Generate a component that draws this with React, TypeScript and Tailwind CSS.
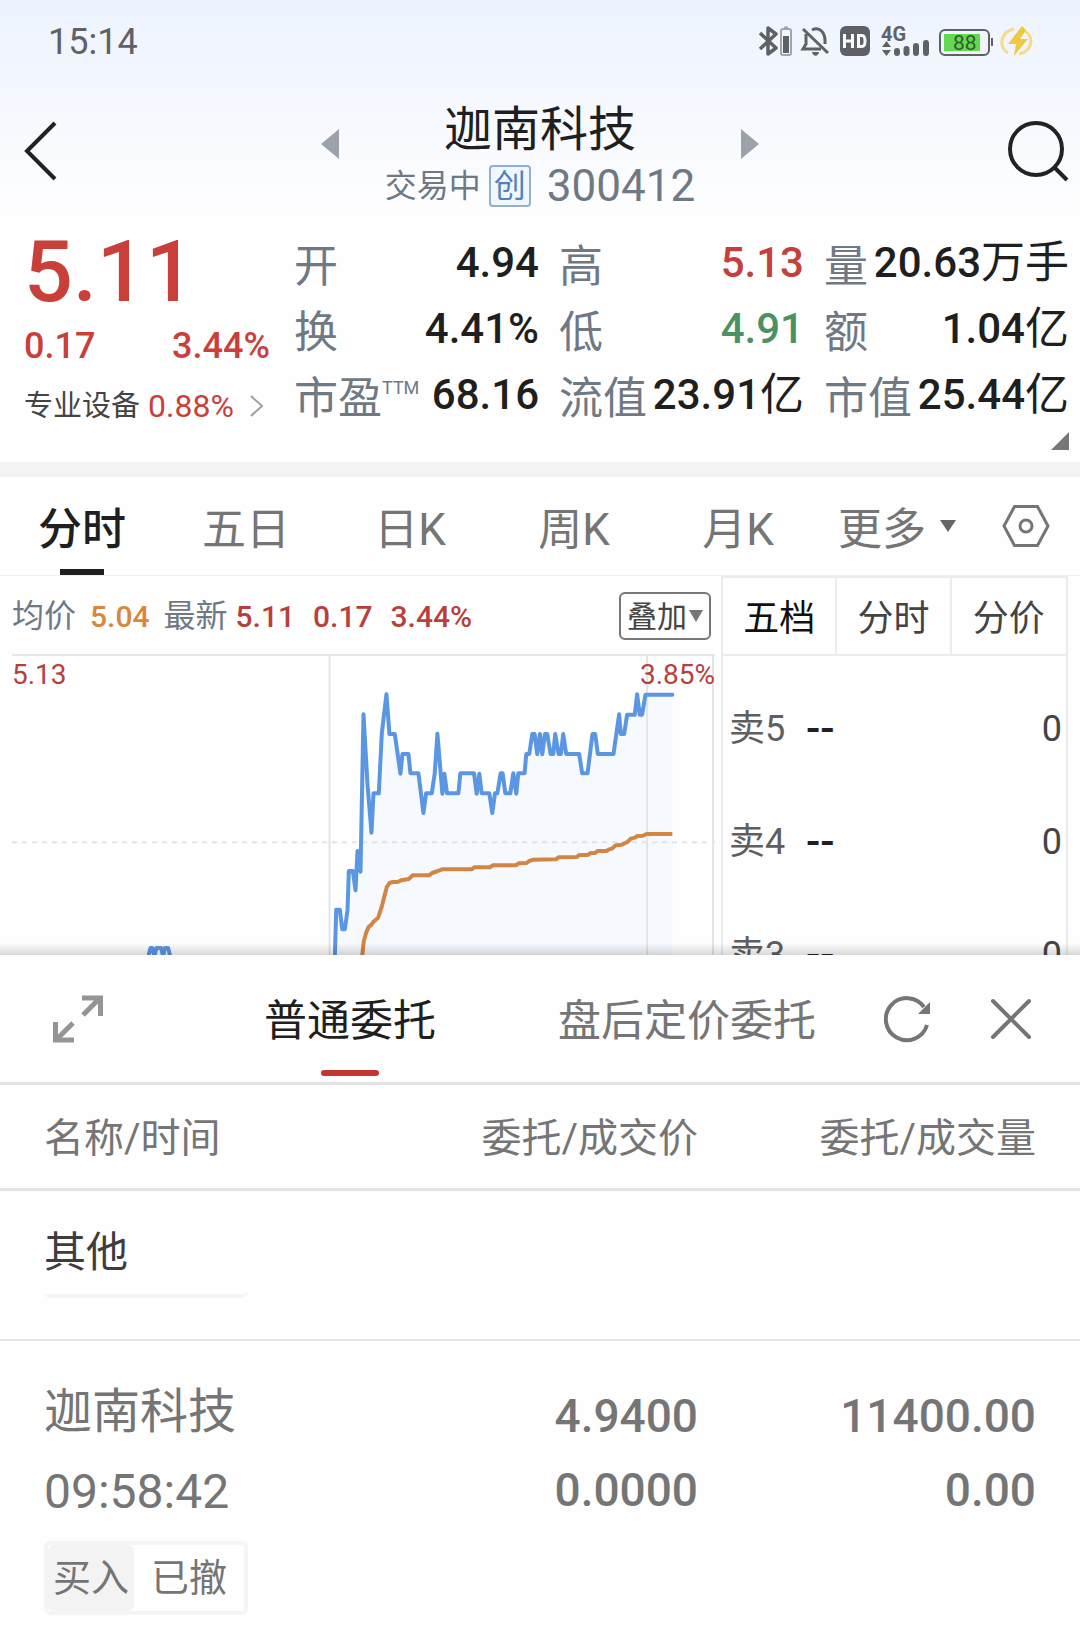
import { useState } from "react";

const quotes = [
  { label: "开", value: "4.94" },
  { label: "高", value: "5.13", color: "text-[#c4403c]" },
  { label: "量", value: "20.63", unit: "万手" },
  { label: "换", value: "4.41%" },
  { label: "低", value: "4.91", color: "text-[#4a9163]" },
  { label: "额", value: "1.04", unit: "亿" },
  { label: "市盈", sup: "TTM", value: "68.16" },
  { label: "流值", value: "23.91", unit: "亿" },
  { label: "市值", value: "25.44", unit: "亿" },
];

const periods = ["分时", "五日", "日K", "周K", "月K"];
const depthTabs = ["五档", "分时", "分价"];
const asks = ["卖5", "卖4", "卖3"];

const pricePoints =
  "76,915 80,776 91,776 98,835 106,835 114,776 118,660 130,660 138,718 144,600 153,662 162,190 174,400 186,545 192,427 208,427 217,247 231,130 240,249 256,249 273,368 279,309 297,309 303,367 327,367 342,486 350,427 367,427 376,367 384,248 399,428 405,368 413,427 447,427 453,367 494,367 502,428 510,368 517,427 540,427 549,486 557,427 564,427 574,367 580,367 588,427 603,427 612,367 621,428 627,367 646,367 651,309 660,309 669,249 676,249 684,310 692,249 699,310 707,249 714,249 724,309 732,309 738,249 748,309 755,309 762,249 771,309 810,309 819,367 835,367 850,249 858,249 866,309 913,309 930,190 935,249 945,249 954,191 977,191 984,130 992,191 999,191 1009,131 1090,131";

const averagePoints =
  "158,915 163,870 170,845 178,827 185,822 192,812 206,800 216,770 225,735 232,708 240,696 250,693 264,693 275,688 298,684 310,673 360,673 368,666 385,660 398,655 488,655 495,649 542,649 550,643 620,643 628,637 652,636 660,630 672,626 740,625 748,619 803,618 810,612 835,612 845,606 858,606 865,600 892,600 900,595 908,593 920,583 938,581 955,573 965,563 978,560 985,555 1002,554 1012,549 1090,549";

const StatusBar = () => (
  <div className="flex h-[84px] items-center justify-between pl-12 pr-[47px] text-[#606164]">
    <span className="text-[36px] leading-none">15:14</span>
    <svg className="h-11 w-[276px]" viewBox="757 20 276 44" fill="none" stroke="currentColor">
      {/* bluetooth */}
      <path d="M760 33l16 15-8 6V28l8 6-16 15" strokeWidth="3.500" strokeLinejoin="round" />
      <rect x="781" y="29" width="10" height="26" rx="2" stroke="#a3a4a8" strokeWidth="2" />
      <path d="M784 27.500h4" stroke="#a3a4a8" strokeWidth="2" />
      <path d="M783 36h6v17h-6z" fill="currentColor" stroke="none" />
      {/* muted bell */}
      <path d="M806 34v10l-3 5h18M812 30c8-4 13 3 13 11v3M803 29l25 24" strokeWidth="3" />
      <path d="M812 52h7c-1 5-6 5-7 0z" fill="currentColor" stroke="none" />
      {/* HD */}
      <rect x="840" y="26" width="30" height="30" rx="6" fill="currentColor" stroke="none" />
      <path d="M844.500 34v14M852.500 34v14M844.500 41h8M858.500 35.500v11h3.500c4 0 4-11 0-11z" stroke="#f6f9ff" strokeWidth="3" />
      {/* signal */}
      <text x="881" y="41" fill="currentColor" stroke="none" className="font-[Roboto] text-[20px] font-bold">
        4G
      </text>
      <path d="M882 47l4.500-6 4.500 6zM882 50l4.500 6 4.500-6z" fill="currentColor" stroke="none" />
      <path d="M897 51v2M906.500 49v4M916 46v7M926 43v10" strokeWidth="6" strokeLinecap="round" />
      {/* battery */}
      <rect x="940" y="30" width="49" height="25" rx="5" strokeWidth="2" />
      <path d="M944 34h36v17h-36z" fill="#62d950" stroke="none" />
      <path d="M992 38v8" strokeWidth="2" />
      <text x="953" y="50" fill="#2f5e2b" stroke="none" className="font-[Roboto] text-[21px]">
        88
      </text>
      {/* charging */}
      <path d="M1014 29c-15 3-15 20-6 24M1025 31c9 6 8 20-6 23" stroke="#f3dc8a" strokeWidth="3" />
      <path d="M1022 26l-14 18h8l-2 12 14-17h-8l6-9z" fill="#f0c93f" stroke="none" />
    </svg>
  </div>
);

const Header = () => (
  <header className="grid h-[134px] grid-cols-[1fr_438px_1fr] items-center px-[11px]">
    <button aria-label="返回" className="ml-3 justify-self-start">
      <svg className="h-[60px] w-9" viewBox="0 0 36 60" fill="none" stroke="#222" strokeWidth="4">
        <path d="M32 2L4 30l28 28" />
      </svg>
    </button>
    <div className="flex items-center justify-between self-start pt-[18px]">
      <button aria-label="上一只" className="mb-7">
        <svg className="h-[30px] w-[18px]" viewBox="0 0 18 30" fill="#9ca2ab">
          <path d="M18 0v30L0 15z" />
        </svg>
      </button>
      <div className="flex flex-col items-center">
        <h1 className="text-[48px] leading-[56px] text-[#1f1f1f]">迦南科技</h1>
        <div className="flex h-14 items-center text-[#6f7984]">
          <span className="text-[32px] leading-none">交易中</span>
          <span className="ml-2 flex size-[42px] items-center justify-center rounded border-2 border-[#8fb0cf] bg-[#f1f7fd] text-[32px] leading-none text-[#4f83bd]">
            创
          </span>
          <span className="ml-4 text-[44px] leading-none">300412</span>
        </div>
      </div>
      <button aria-label="下一只" className="mb-7">
        <svg className="h-[30px] w-[18px]" viewBox="0 0 18 30" fill="#9ca2ab">
          <path d="M0 0v30l18-15z" />
        </svg>
      </button>
    </div>
    <button aria-label="搜索" className="justify-self-end">
      <svg className="size-[62px]" viewBox="0 0 62 62" fill="none" stroke="#222" strokeWidth="4">
        <circle cx="29" cy="29" r="26" />
        <path d="M47 47l13 13" />
      </svg>
    </button>
  </header>
);

const Quote = () => (
  <section className="flex pl-6 pr-[11px] pt-2 text-[#c9403b]">
    <div className="w-[246px] shrink-0">
      <div className="text-[86px] font-medium leading-[92px]">5.11</div>
      <div className="flex justify-between text-[36px] font-medium leading-[56px]">
        <span>0.17</span>
        <span>3.44%</span>
      </div>
      <a href="#sector" className="flex items-center text-[32px] leading-[64px]">
        <span className="mr-2 text-[29px] text-[#444]">专业设备</span>
        0.88%
        <svg className="ml-4 h-[22px] w-3.5" viewBox="0 0 14 22" fill="none" stroke="#9aa0a6" strokeWidth="2">
          <path d="M1 1l11 10L1 21" />
        </svg>
      </a>
    </div>
    <div className="ml-6 flex-1 pt-2">
      <dl className="grid grid-cols-3 gap-x-5">
        {quotes.map((item) => (
          <div key={item.label} className="flex h-[66px] items-center justify-between whitespace-nowrap">
            <dt className="flex text-[44px] leading-[66px] text-[#6f7984]">
              {item.label}
              {item.sup && <sup className="top-0 text-[18px] leading-[44px]">{item.sup}</sup>}
            </dt>
            <dd className={`flex items-center pb-2 text-[42px] font-medium leading-[58px] ${item.color ?? "text-[#1f1f1f]"}`}>
              {item.value}
              {item.unit && <span className="text-[44px] font-normal">{item.unit}</span>}
            </dd>
          </div>
        ))}
      </dl>
      <svg className="mb-3 ml-auto size-[18px]" viewBox="0 0 18 18" fill="#777">
        <path d="M18 0v18H0z" />
      </svg>
    </div>
  </section>
);

const Chart = () => (
  <div className="relative h-[300px] border-t-2 border-[#e6e6e6]">
    <svg className="h-[300px] w-full" viewBox="-894 15 2112 900" preserveAspectRatio="none" fill="none">
      <polygon points={`${pricePoints} 1090,915`} fill="#f6f9fe" />
      <g stroke="#e2e4e6" strokeWidth="2">
        <path d="M60 15v900M1014 15v900M1212 15v900" vectorEffect="non-scaling-stroke" />
        <path d="M-894 574H1218" strokeDasharray="5 5" vectorEffect="non-scaling-stroke" />
      </g>
      <g stroke="#5b96e3" strokeWidth="4" strokeLinejoin="round" strokeLinecap="round">
        <polyline points={pricePoints} vectorEffect="non-scaling-stroke" />
        <path d="M-484 915l6-24h6l6 24 6-24h14l6 24 5-24h10l6 24" vectorEffect="non-scaling-stroke" />
      </g>
      <polyline points={averagePoints} stroke="#d28644" strokeWidth="4" strokeLinejoin="round" vectorEffect="non-scaling-stroke" />
    </svg>
    <span className="absolute left-0 top-0 text-[28px] leading-[38px] text-[#b8403c]">5.13</span>
    <span className="absolute right-0 top-0 text-[28px] leading-[38px] text-[#b8403c]">3.85%</span>
  </div>
);

const MarketView = () => {
  const [period, setPeriod] = useState("分时");
  const [depth, setDepth] = useState("五档");

  return (
    <section className="border-t-[15px] border-[#f3f3f3]">
      <nav className="flex h-[99px] items-center border-b border-[#f0f0f0] text-[44px] text-[#757575]">
        {periods.map((name) => (
          <button
            key={name}
            onClick={() => setPeriod(name)}
            className={`relative h-full flex-1 pt-2 ${period === name ? "font-medium text-[#1f1f1f]" : ""}`}
          >
            {name}
            {period === name && <span className="absolute inset-x-0 bottom-0 mx-auto h-1.5 w-11 bg-[#1f1f1f]" />}
          </button>
        ))}
        <button className="ml-[18px] flex items-center gap-3.5">
          <span className="pt-2">更多</span>
          <svg className="h-3 w-4" viewBox="0 0 16 12" fill="#666">
            <path d="M0 0h16L8 12z" />
          </svg>
        </button>
        <button aria-label="设置" className="ml-[46px] mr-[30px]">
          <svg className="h-[42px] w-12" viewBox="0 0 48 42" fill="none" stroke="#757575" strokeWidth="3">
            <path d="M12.500 1.500h23L46 21 35.500 40.500h-23L2 21z" />
            <circle cx="24" cy="21" r="6" />
          </svg>
        </button>
      </nav>

      <div className="relative flex h-[379px] overflow-hidden pl-3 pr-3">
        <div className="min-w-0 flex-1">
          <div className="flex h-[78px] items-center justify-between pt-0.5">
            <div className="flex items-center whitespace-nowrap text-[32px] text-[#6f7984]">
              均价
              <span className="ml-3.5 mr-3.5 text-[30px] font-medium text-[#d9873f]">5.04</span>
              最新
              <span className="ml-2 flex gap-[18px] text-[30px] font-medium text-[#b8403c]">
                <span>5.11</span>
                <span>0.17</span>
                <span>3.44%</span>
              </span>
            </div>
            <button className="mr-1 flex h-12 items-center gap-0.5 rounded-md border-2 border-[#777] px-1.5 text-[30px] text-[#444]">
              叠加
              <svg className="h-3 w-3.5" viewBox="0 0 14 12" fill="#777">
                <path d="M0 0h14L7 12z" />
              </svg>
            </button>
          </div>
          <Chart />
        </div>

        <div className="ml-1.5 h-[400px] w-[347px] shrink-0 border-2 border-[#ececec] text-[36px] text-[#444]">
          <div className="grid h-[78px] grid-cols-3 divide-x-2 divide-[#ececec] border-b-2 border-[#ececec]">
            {depthTabs.map((name) => (
              <button key={name} onClick={() => setDepth(name)} className={`pt-1.5 ${depth === name ? "text-[#111]" : ""}`}>
                {name}
              </button>
            ))}
          </div>
          <div className="pt-4">
            {asks.map((name) => (
              <div key={name} className="flex h-[113px] items-center pl-1.5 pr-1">
                <span className="w-[77px] text-[#5f5f5f]">{name}</span>
                <span className="text-[42px] font-medium text-[#1f1f1f]">--</span>
                <span className="ml-auto">0</span>
              </div>
            ))}
          </div>
        </div>
        <div className="pointer-events-none absolute inset-x-0 bottom-0 h-3 bg-linear-to-t from-black/15 to-transparent" />
      </div>
    </section>
  );
};

const Orders = () => (
  <section className="bg-[#fefefe] text-[#757575]">
    <div className="flex h-[130px] items-center border-b-[3px] border-[#e3e3e3] pl-[52px] pr-12 text-[43px]">
      <button aria-label="展开">
        <svg className="size-[52px]" viewBox="0 0 52 52" fill="none" stroke="#959595" strokeWidth="5">
          <path d="M30 5h18.500v18M48 5L31 22M3.500 29v18H22M4 47l17-17" />
        </svg>
      </button>
      <button className="relative ml-40 h-full pt-1.5 text-[#1f1f1f]">
        普通委托
        <span className="absolute inset-x-0 bottom-1.5 mx-auto h-1.5 w-[58px] rounded-sm bg-[#c23531]" />
      </button>
      <button className="ml-auto h-full pt-1.5">盘后定价委托</button>
      <button aria-label="刷新" className="ml-[68px]">
        <svg className="size-12" viewBox="0 0 48 48" fill="none" stroke="#757575" strokeWidth="4">
          <path d="M43 30A21 21 0 1 1 40 12" />
          <path d="M46 7v12H34z" fill="#757575" stroke="none" />
        </svg>
      </button>
      <button aria-label="关闭" className="ml-[58px]">
        <svg className="size-[42px]" viewBox="0 0 42 42" fill="none" stroke="#757575" strokeWidth="4" strokeLinecap="round">
          <path d="M3 3l36 36M39 3L3 39" />
        </svg>
      </button>
    </div>

    <table className="w-full table-fixed">
      <thead>
        <tr className="h-[104px] border-b-[3px] border-[#e3e3e3] text-[40px]">
          <th className="w-[30%] whitespace-nowrap pl-11 pt-1.5 text-left font-normal">名称/时间</th>
          <th className="w-[35%] whitespace-nowrap pr-1 pt-1.5 text-right font-normal">委托/成交价</th>
          <th className="w-[35%] whitespace-nowrap pr-11 pt-1.5 text-right font-normal">委托/成交量</th>
        </tr>
      </thead>
      <tbody>
        <tr className="h-[151px] border-b-2 border-[#e6e6e6]">
          <td colSpan={3} className="pl-11 align-top text-[42px] text-[#3d3d3d]">
            <div className="h-[107px] w-[204px] rounded-md border-b-4 border-[#f5f5f5] leading-[124px]">其他</div>
          </td>
        </tr>
        <tr className="align-top text-[46px] font-medium">
          <td className="pl-11 pt-8 font-normal">
            <div className="text-[48px] leading-[78px]">迦南科技</div>
            <div className="text-[48px] leading-[82px]">09:58:42</div>
            <div className="mt-2 flex h-[74px] w-[204px] items-center rounded-md border-4 border-[#f5f5f5] text-[38px]">
              <span className="flex h-full w-[86px] items-center justify-center rounded-md bg-[#f3f3f3]">买入</span>
              <span className="flex-1 text-center">已撤</span>
            </div>
          </td>
          <td className="pr-1 pt-[38px] text-right leading-[74px]">
            <div>4.9400</div>
            <div>0.0000</div>
          </td>
          <td className="pr-11 pt-[38px] text-right leading-[74px]">
            <div>11400.00</div>
            <div>0.00</div>
          </td>
        </tr>
      </tbody>
    </table>
  </section>
);

const App = () => (
  <main className="min-h-screen bg-[#fefefe] font-[Roboto,'Noto_Sans_CJK_SC',sans-serif]">
    <div className="bg-linear-to-b from-[#edf3fe] to-[#fefefe]">
      <StatusBar />
      <Header />
    </div>
    <Quote />
    <MarketView />
    <Orders />
  </main>
);

export default App;
